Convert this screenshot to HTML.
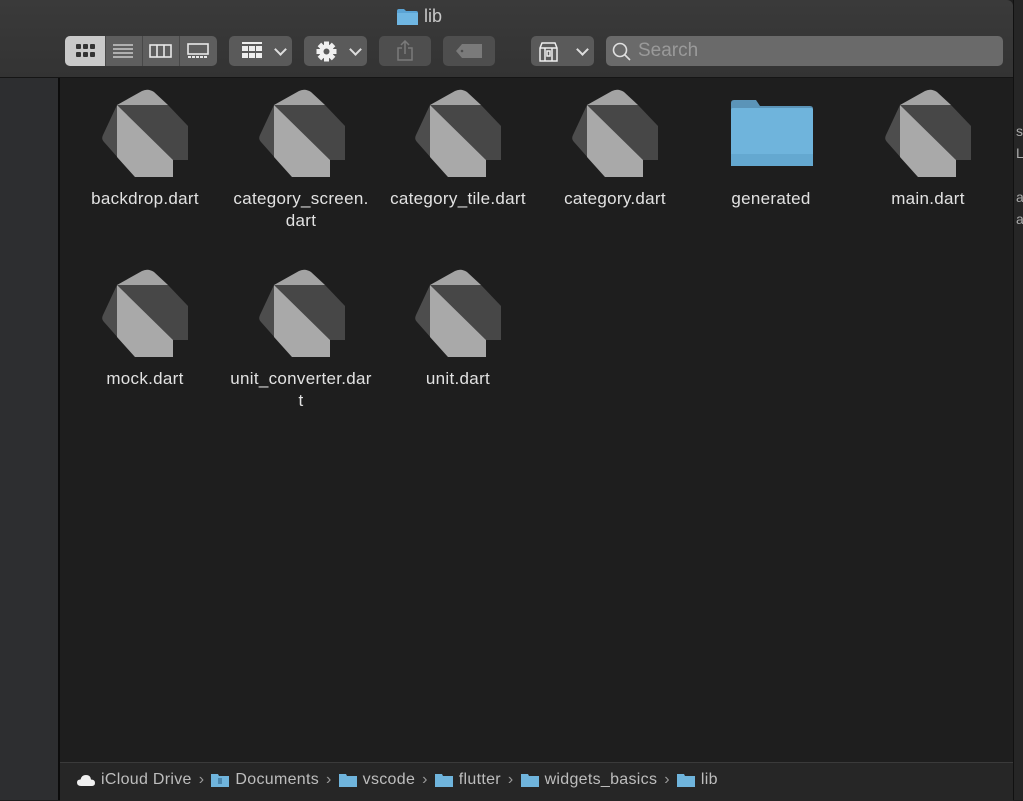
<!DOCTYPE html>
<html><head><meta charset="utf-8"><style>
body{margin:0;width:1023px;height:800px;background:#1e1e1e;position:relative;overflow:hidden;font-family:"Liberation Sans",sans-serif}
.abs{position:absolute}
.tb{left:0;top:0;width:1013px;height:77px;background:linear-gradient(#3a3a3a,#333);border-bottom:1px solid #151515;border-radius:0 6px 0 0}
.btn{position:absolute;top:36px;height:30px;background:#5a5a5a;border-radius:5px}
.lbl{position:absolute;width:156px;text-align:center;color:#e2e2e2;font-size:17px;letter-spacing:0.3px;line-height:22px;white-space:nowrap}
.arrow{position:absolute;width:7px;height:7px;border-right:2px solid #ddd;border-bottom:2px solid #ddd;transform:rotate(45deg)}
.sep{margin:0 7px;color:#999}
.pb span.t{margin-left:6px}
</style></head><body>
<div class="abs" style="left:1013px;top:0;width:10px;height:800px;background:#262626;border-left:1px solid #111"></div>
<div class="abs" style="left:1016px;top:120px;color:#aaa;font-size:14px;line-height:22px">s.<br>L<br><br>a<br>a</div>
<div class="abs tb"></div>
<svg class="abs" style="left:397px;top:9px" width="21" height="16"><path d="M0 2 Q0 0 2 0 H7 L9 2 H19 Q21 2 21 4 V16 H0Z" fill="#5aa3d4"/><rect x="0" y="4" width="21" height="12" fill="#6fb6e2"/></svg>
<div class="abs" style="left:424px;top:6px;color:#c8c8c8;font-size:18px">lib</div>
<div class="btn" style="left:65px;width:152px;background:#5e5e5e"></div>
<div class="btn" style="left:65px;width:40px;background:#c9c9c9;border-radius:5px 0 0 5px"></div>
<div class="abs" style="left:105px;top:36px;width:1px;height:30px;background:#484848"></div>
<div class="abs" style="left:142px;top:36px;width:1px;height:30px;background:#484848"></div>
<div class="abs" style="left:179px;top:36px;width:1px;height:30px;background:#484848"></div>
<svg class="abs" style="left:76px;top:44px" width="20" height="14" fill="#333"><rect x="0" y="0" width="5" height="5" rx="1"/><rect x="7" y="0" width="5" height="5" rx="1"/><rect x="14" y="0" width="5" height="5" rx="1"/><rect x="0" y="8" width="5" height="5" rx="1"/><rect x="7" y="8" width="5" height="5" rx="1"/><rect x="14" y="8" width="5" height="5" rx="1"/></svg>
<svg class="abs" style="left:113px;top:44px" width="20" height="14" stroke="#e0e0e0" stroke-width="1.3"><path d="M0 1H20M0 5H20M0 9H20M0 13H20"/></svg>
<svg class="abs" style="left:149px;top:44px" width="23" height="14" stroke="#e8e8e8" stroke-width="1.6" fill="none"><rect x="1" y="1" width="21" height="12"/><path d="M8 1V13M15 1V13"/></svg>
<svg class="abs" style="left:187px;top:43px" width="22" height="16" fill="#e8e8e8"><rect x="1" y="1" width="20" height="10" fill="none" stroke="#e8e8e8" stroke-width="1.6"/><rect x="1" y="13" width="3" height="2"/><rect x="5" y="13" width="3" height="2"/><rect x="9" y="13" width="3" height="2"/><rect x="13" y="13" width="3" height="2"/><rect x="17" y="13" width="3" height="2"/></svg>
<div class="btn" style="left:229px;width:63px"></div>
<svg class="abs" style="left:242px;top:42px" width="21" height="19" fill="#eee"><rect x="0" y="0" width="20" height="2"/><rect x="0" y="4" width="6" height="5"/><rect x="7" y="4" width="6" height="5"/><rect x="14" y="4" width="6" height="5"/><rect x="0" y="11" width="6" height="5"/><rect x="7" y="11" width="6" height="5"/><rect x="14" y="11" width="6" height="5"/></svg>
<div class="arrow" style="left:276px;top:45px"></div>
<div class="btn" style="left:304px;width:63px"></div>
<svg class="abs" style="left:316px;top:41px" width="21" height="21" viewBox="-10.5 -10.5 21 21"><g fill="#f0f0f0"><circle r="7"/><rect x="-2.5" y="-10" width="5" height="20"/><rect x="-2.5" y="-10" width="5" height="20" transform="rotate(45)"/><rect x="-2.5" y="-10" width="5" height="20" transform="rotate(90)"/><rect x="-2.5" y="-10" width="5" height="20" transform="rotate(135)"/></g><circle r="3" fill="#5a5a5a"/></svg>
<div class="arrow" style="left:351px;top:45px"></div>
<div class="btn" style="left:379px;width:52px;background:#4e4e4e"></div>
<svg class="abs" style="left:396px;top:40px" width="18" height="22" stroke="#7a7a7a" stroke-width="1.5" fill="none"><path d="M9 1V14M5 5L9 1L13 5M6 8H2V20H16V8H12"/></svg>
<div class="btn" style="left:443px;width:52px;background:#4e4e4e"></div>
<svg class="abs" style="left:456px;top:44px" width="26" height="14"><path d="M6 0H26V14H6L0 7Z" fill="#7a7a7a"/><circle cx="6" cy="7" r="1.3" fill="#4e4e4e"/></svg>
<div class="btn" style="left:531px;width:63px"></div>
<svg class="abs" style="left:538px;top:41px" width="21" height="21" stroke="#eee" stroke-width="1.5" fill="none"><path d="M2 7L4 2H17L19 7V20H2ZM2 7H19M7 7V20M14 7V20M9 10H12V15H9Z"/></svg>
<div class="arrow" style="left:578px;top:45px"></div>
<div class="btn" style="left:606px;width:397px;background:#6a6a6a"></div>
<svg class="abs" style="left:612px;top:42px" width="20" height="20" stroke="#e0e0e0" stroke-width="1.6" fill="none"><circle cx="8" cy="8" r="6.5"/><path d="M12.5 12.5L18 18"/></svg>
<div class="abs" style="left:638px;top:40px;color:#9a9a9a;font-size:19px">Search</div>
<div class="abs" style="left:0;top:78px;width:58px;height:722px;background:#2d2e30;border-right:2px solid #0c0c0c"></div>
<div class="abs" style="left:60px;top:762px;width:953px;height:38px;background:#262626;border-top:1px solid #3a3a3a"></div>

<svg class="abs" style="left:0;top:0" width="1013" height="440">
<defs><g id="d">
<path d="M17 20L3 50Q1 54 4 57L35 92L50 70Z" fill="#4d4d4d"/>
<path d="M17 20L42 6Q48 3 54 7L68 20Z" fill="#a3a3a3"/>
<path d="M17 20H68L88 41V75H73Z" fill="#474747"/>
<path d="M17 20L73 75V92H35L17 72Z" fill="#a9a9a9"/>
</g></defs>
<use href="#d" x="100" y="85"/><use href="#d" x="257" y="85"/><use href="#d" x="413" y="85"/><use href="#d" x="570" y="85"/><use href="#d" x="883" y="85"/>
<use href="#d" x="100" y="265"/><use href="#d" x="257" y="265"/><use href="#d" x="413" y="265"/>
<path d="M731 103Q731 100 734 100H756L760 106H810Q813 106 813 109V120H731Z" fill="#5b94b8"/>
<rect x="731" y="108" width="82" height="58" rx="2" fill="#6fb4dc"/>
<rect x="731" y="154" width="82" height="12" fill="#64a8d0"/>
</svg>
<div class="lbl" style="left:67px;top:188px">backdrop.dart</div>
<div class="lbl" style="left:223px;top:188px">category_screen.<br>dart</div>
<div class="lbl" style="left:380px;top:188px">category_tile.dart</div>
<div class="lbl" style="left:537px;top:188px">category.dart</div>
<div class="lbl" style="left:693px;top:188px">generated</div>
<div class="lbl" style="left:850px;top:188px">main.dart</div>
<div class="lbl" style="left:67px;top:368px">mock.dart</div>
<div class="lbl" style="left:223px;top:368px">unit_converter.dar<br>t</div>
<div class="lbl" style="left:380px;top:368px">unit.dart</div>

<div class="abs pb" style="left:77px;top:769px;font-size:16px;letter-spacing:0.3px;color:#bdbdbd;white-space:nowrap;display:flex;align-items:center;height:22px">
<svg width="18" height="12"><path d="M4 12Q0 12 0 8.5Q0 5.5 3.5 5.5Q4.5 1 9 1Q13.5 1 14 5.5Q18 5.5 18 9Q18 12 14.5 12Z" fill="#f0f0f0"/></svg>
<span class="t">iCloud Drive</span><span class="sep">›</span>
<svg width="18" height="14"><path d="M0 1H7L8 3H18V14H0Z" fill="#6fb4dc"/><rect x="7" y="5" width="4" height="6" fill="#4a86ad"/></svg><span class="t">Documents</span><span class="sep">›</span>
<svg width="18" height="14"><path d="M0 1H7L8 3H18V14H0Z" fill="#6fb4dc"/></svg><span class="t">vscode</span><span class="sep">›</span>
<svg width="18" height="14"><path d="M0 1H7L8 3H18V14H0Z" fill="#6fb4dc"/></svg><span class="t">flutter</span><span class="sep">›</span>
<svg width="18" height="14"><path d="M0 1H7L8 3H18V14H0Z" fill="#6fb4dc"/></svg><span class="t">widgets_basics</span><span class="sep">›</span>
<svg width="18" height="14"><path d="M0 1H7L8 3H18V14H0Z" fill="#6fb4dc"/></svg><span class="t">lib</span>
</div>
</body></html>
